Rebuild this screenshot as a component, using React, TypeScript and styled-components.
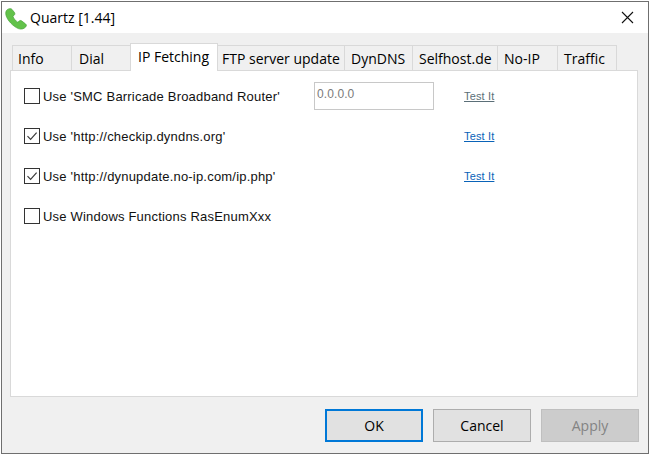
import React from "react";
import styled, { createGlobalStyle } from "styled-components";

const Global = createGlobalStyle`
  html, body { margin: 0; padding: 0; background: #fff; }
  body { width: 649px; height: 454px; overflow: hidden; font-family: "Open Sans", "Noto Sans", sans-serif; }
`;

const Win = styled.div`
  box-sizing: border-box;
  width: 648px;
  height: 453px;
  margin: 1px 0 0 1px;
  border: 1px solid #6f6f6f;
  display: flex;
  flex-direction: column;
  background: #f0f0f0;
`;

const TitleBar = styled.div`
  height: 31px;
  flex: none;
  background: #fff;
  display: flex;
  align-items: center;
  padding-left: 3px;
`;

const AppIcon = styled.svg`
  width: 22px;
  height: 22px;
  flex: none;
  margin-top: 3px;
`;

const Title = styled.div`
  margin: 0 0 1px 3px;
  font-size: 14px;
  color: #000;
  white-space: nowrap;
`;

const CloseBtn = styled.svg`
  margin-left: auto;
  margin-right: 14px;
  width: 13px;
  height: 13px;
  flex: none;
`;

const TabBar = styled.div`
  height: 37px;
  flex: none;
  display: flex;
  align-items: flex-end;
  padding-left: 10px;
  position: relative;
  z-index: 1;
`;

const Tab = styled.div<{ $w: number; $pad: number; $first?: boolean }>`
  box-sizing: border-box;
  width: ${(p) => p.$w}px;
  height: 25px;
  padding-left: ${(p) => p.$pad}px;
  background: #f0f0f0;
  border-top: 1px solid #d9d9d9;
  border-right: 1px solid #d9d9d9;
  border-left: ${(p) => (p.$first ? "1px solid #d9d9d9" : "none")};
  display: flex;
  align-items: center;
  font-size: 14px;
  color: #000;
  white-space: nowrap;
`;

const ActiveTab = styled(Tab)`
  height: 28px;
  margin: 0 0 -1px -1px;
  padding-bottom: 3px;
  background: #fff;
  border-left: 1px solid #d9d9d9;
`;

const Panel = styled.div`
  box-sizing: border-box;
  width: 628px;
  height: 327px;
  margin-left: 8px;
  flex: none;
  background: #fff;
  border: 1px solid #d9d9d9;
  padding: 5px 0 0 13px;
`;

const OptionRow = styled.div`
  height: 40px;
  display: grid;
  grid-template-columns: 260px 120px auto;
  column-gap: 30px;
  align-items: center;
  justify-content: start;
`;

const Check = styled.div`
  display: flex;
  align-items: center;
  gap: 3px;
  font-family: "Liberation Sans", Arial, sans-serif;
  font-size: 13px;
  letter-spacing: 0.2px;
  color: #111;
  white-space: nowrap;
`;

const Box = styled.span`
  box-sizing: border-box;
  width: 16px;
  height: 16px;
  flex: none;
  border: 1px solid #333;
  background: #fff;
  display: flex;
  align-items: center;
  justify-content: center;
`;

const IpField = styled.div`
  box-sizing: border-box;
  grid-column: 2;
  height: 28px;
  border: 1px solid #c8c8c8;
  background: #fff;
  padding: 0 0 5px 2px;
  display: flex;
  align-items: center;
  font-family: "Liberation Sans", Arial, sans-serif;
  font-size: 12px;
  letter-spacing: 0.1px;
  color: #7a7a7a;
`;

const TestLink = styled.a<{ $visited?: boolean }>`
  grid-column: 3;
  font-family: "Liberation Sans", Arial, sans-serif;
  font-size: 11px;
  letter-spacing: 0.15px;
  color: ${(p) => (p.$visited ? "#5b6f78" : "#0a63b8")};
  text-decoration: underline;
`;

const Footer = styled.div`
  flex: 1;
  display: flex;
  justify-content: flex-end;
  gap: 10px;
  padding: 12px 9px 0 0;
`;

const Btn = styled.div<{ $kind?: "default" | "disabled" }>`
  box-sizing: border-box;
  width: 98px;
  height: 33px;
  display: flex;
  align-items: center;
  justify-content: center;
  font-size: 14px;
  background: ${(p) => (p.$kind === "disabled" ? "#cccccc" : "#e1e1e1")};
  color: ${(p) => (p.$kind === "disabled" ? "#838383" : "#000")};
  border: ${(p) =>
    p.$kind === "default"
      ? "2px solid #0078d7"
      : p.$kind === "disabled"
      ? "1px solid #bfbfbf"
      : "1px solid #adadad"};
`;

const Tick = () => (
  <svg width="14" height="14" viewBox="0 0 14 14">
    <path d="M2.5 7.2 L5.6 10.3 L11.6 3.6" fill="none" stroke="#3a3a3a" strokeWidth="1.2" />
  </svg>
);

const Option = ({ label, checked }: { label: string; checked?: boolean }) => (
  <Check>
    <Box>{checked && <Tick />}</Box>
    <span>{label}</span>
  </Check>
);

export default function App() {
  return (
    <>
      <Global />
      <Win>
        <TitleBar>
          <AppIcon viewBox="0 0 22 22">
            <path
              d="M2.6 1.4 C0.8 2.4 0.3 4.8 1.1 7.6 C2.5 12.4 8 18.4 13.4 20.6 C16 21.6 19 21 20.8 18.8 C21.8 17.6 21.4 16.6 20.4 15.8 L16.8 13 C15.6 12.2 14.8 12.4 14 13.2 L12.8 14.3 C10.8 13 8.8 10.6 7.9 8.4 L9.2 7.2 C10 6.4 10 5.4 9.5 4.6 L7 1.4 C6 0.3 4.2 0.5 2.6 1.4 Z"
              fill="#62c24a"
              stroke="#44a236"
              strokeWidth="0.7"
            />
          </AppIcon>
          <Title>Quartz [1.44]</Title>
          <CloseBtn viewBox="0 0 13 13">
            <path d="M1 1 L12 12 M12 1 L1 12" stroke="#111" strokeWidth="1.1" fill="none" />
          </CloseBtn>
        </TitleBar>
        <TabBar>
          <Tab $first $w={60} $pad={5}>Info</Tab>
          <Tab $w={59} $pad={7}>Dial</Tab>
          <ActiveTab $w={88} $pad={7}>IP Fetching</ActiveTab>
          <Tab $w={127} $pad={4}>FTP server update</Tab>
          <Tab $w={68} $pad={6}>DynDNS</Tab>
          <Tab $w={85} $pad={6}>Selfhost.de</Tab>
          <Tab $w={60} $pad={6}>No-IP</Tab>
          <Tab $w={59} $pad={6}>Traffic</Tab>
        </TabBar>
        <Panel>
          <OptionRow>
            <Option label="Use 'SMC Barricade Broadband Router'" />
            <IpField>0.0.0.0</IpField>
            <TestLink $visited>Test It</TestLink>
          </OptionRow>
          <OptionRow>
            <Option label="Use 'http://checkip.dyndns.org'" checked />
            <TestLink>Test It</TestLink>
          </OptionRow>
          <OptionRow>
            <Option label="Use 'http://dynupdate.no-ip.com/ip.php'" checked />
            <TestLink>Test It</TestLink>
          </OptionRow>
          <OptionRow>
            <Option label="Use Windows Functions RasEnumXxx" />
          </OptionRow>
        </Panel>
        <Footer>
          <Btn $kind="default">OK</Btn>
          <Btn>Cancel</Btn>
          <Btn $kind="disabled">Apply</Btn>
        </Footer>
      </Win>
    </>
  );
}
